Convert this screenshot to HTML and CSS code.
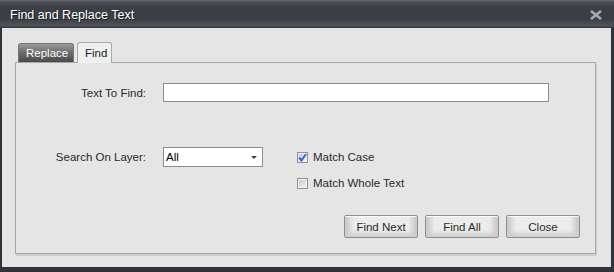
FILE: index.html
```html
<!DOCTYPE html>
<html>
<head>
  <title>Find and Replace Text</title>
  <link rel="stylesheet" href="styles.css">
</head>
<body>
  <div class="window">
    <div class="titlebar">
      <span class="title">Find and Replace Text</span>
      <span class="close-x">
        <svg width="12" height="10" viewBox="0 0 12 10"><path d="M1 1 L11 9 M11 1 L1 9" stroke="#a3abb4" stroke-width="2.6"/></svg>
      </span>
    </div>

    <div class="content">
      <div class="tabs">
        <div class="tab dark">Replace</div>
        <div class="tab active">Find</div>
      </div>

      <div class="panel">
        <div class="row find-row">
          <label class="field-label">Text To Find:</label>
          <div class="text-input"></div>
        </div>

        <div class="row layer-row">
          <label class="field-label">Search On Layer:</label>
          <div class="select">
            <span>All</span>
            <span class="arrow"></span>
          </div>
          <div class="checks">
            <div class="check">
              <span class="box">
                <svg width="9" height="9" viewBox="0 0 9 9"><path d="M1 4.5 L3.5 7.5 L8 1" stroke="#2e6fc8" stroke-width="2" fill="none"/></svg>
              </span>
              Match Case
            </div>
            <div class="check">
              <span class="box"></span>
              Match Whole Text
            </div>
          </div>
        </div>

        <div class="buttons">
          <button class="btn">Find Next</button>
          <button class="btn">Find All</button>
          <button class="btn">Close</button>
        </div>
      </div>
    </div>
  </div>
</body>
</html>
```

FILE: styles.css
```css
body {
  margin: 0;
  font-family: 'Liberation Sans', Arial, sans-serif;
  background: #2d3035;
}

.window {
  width: 614px;
  height: 272px;
  box-sizing: border-box;
  padding: 0 3px 5px 2px;
  background: #30333a;
  display: flex;
  flex-direction: column;
}

.titlebar {
  height: 28px;
  margin: 0 -3px 0 -2px;
  padding: 0 12px 0 10px;
  display: flex;
  align-items: center;
  justify-content: space-between;
  background: linear-gradient(#6a6d73 0px, #4b4e55 2px, #3c3f45 8px, #3a3d43 18px, #50535a 26px, #2c2f34 28px);
}

.title {
  color: #ffffff;
  font-size: 12.5px;
  text-shadow: 1px 1px 0 #1e2024;
  margin-top: 1px;
}

.close-x {
  display: flex;
  margin-top: 1px;
}

.content {
  flex: 1;
  background: #e5e5e5;
  padding: 14px 0 0 13px;
}

/* Tabs */
.tabs {
  display: flex;
  gap: 3px;
  padding-left: 3px;
  height: 20px;
  position: relative;
  z-index: 1;
}

.tab {
  font-size: 11.5px;
  padding: 0 7px;
  line-height: 19px;
  border-radius: 3px 3px 0 0;
}

.tab.dark {
  color: #ffffff;
  background: linear-gradient(#9a9a9a, #6e6e6e 45%, #4a4a4a);
  border: 1px solid #777;
  border-bottom: none;
  margin-top: 1px;
  height: 18px;
  line-height: 18px;
  width: 40px;
}

.tab.active {
  color: #222;
  background: #efefef;
  border: 1px solid #a8a8a8;
  border-bottom: none;
  height: 20px;
  line-height: 21px;
  width: 19px;
}

.panel {
  width: 579px;
  height: 190px;
  border: 1px solid #a6a6a6;
  box-shadow: 1px 2px 0 #cfcfcf;
  display: flex;
  flex-direction: column;
}

.row {
  display: flex;
  align-items: flex-start;
}

.field-label {
  width: 130px;
  text-align: right;
  font-size: 11.5px;
  color: #2a2a2a;
  margin-right: 17px;
}

.find-row {
  margin-top: 20px;
  align-items: center;
}

.text-input {
  width: 384px;
  height: 17px;
  background: #ffffff;
  border: 1px solid #8c8c8c;
}

.layer-row {
  margin-top: 45px;
}

.layer-row .field-label {
  line-height: 20px;
}

.select {
  height: 18px;
  background: #ffffff;
  border: 1px solid #8c8c8c;
  display: flex;
  align-items: center;
  justify-content: space-between;
  font-size: 11.5px;
  color: #000;
  padding-left: 2px;
  width: 96px;
}

.arrow {
  width: 0;
  height: 0;
  border-left: 3px solid transparent;
  border-right: 3px solid transparent;
  border-top: 3px solid #444;
  margin-right: 5px;
}

.checks {
  margin-left: 34px;
  display: flex;
  flex-direction: column;
  gap: 6px;
}

.check {
  display: flex;
  align-items: center;
  height: 20px;
  font-size: 11.5px;
  color: #2a2a2a;
}

.box {
  width: 9px;
  height: 9px;
  border: 1px solid #8f8f8f;
  background: linear-gradient(135deg, #c4c4c4, #f6f6f6);
  box-shadow: inset 0 0 0 1px #f2f2f2;
  margin-right: 5px;
  display: flex;
}

.buttons {
  margin-top: auto;
  margin-bottom: 15px;
  display: flex;
  justify-content: flex-end;
  gap: 7px;
  padding-right: 15px;
}

.btn {
  width: 74px;
  height: 23px;
  font-family: 'Liberation Sans', Arial, sans-serif;
  font-size: 11.5px;
  color: #2a2a2a;
  border: 1px solid #8e8e8e;
  border-radius: 2px;
  background: linear-gradient(90deg, #c4c4c4 0, #ececec 12%, #ececec 88%, #c4c4c4 100%);
  box-shadow: inset 0 1px 0 #fafafa, inset 0 -4px 4px #cfcfcf;
  padding: 0;
}
```
